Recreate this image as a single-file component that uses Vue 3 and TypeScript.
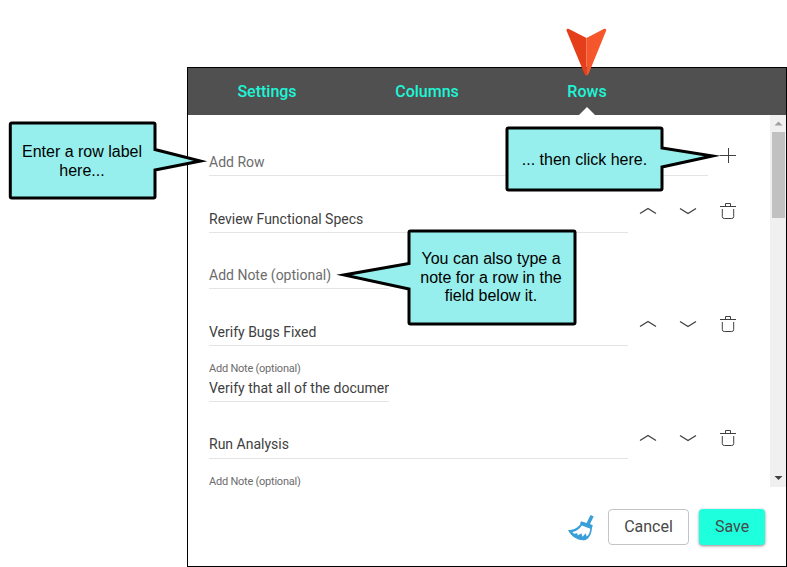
<script setup lang="ts">
import { ref } from 'vue'

interface Row {
  name: string
  note: string
  labelFloats: boolean
}

interface Callout {
  id: string
  path: string
  lines: string[]
}

const tabs = ['Settings', 'Columns', 'Rows']
const activeTab = ref('Rows')

const rows = ref<Row[]>([
  { name: 'Review Functional Specs', note: '', labelFloats: false },
  { name: 'Verify Bugs Fixed', note: 'Verify that all of the documen', labelFloats: true },
  { name: 'Run Analysis', note: '', labelFloats: true },
])

const callouts: Callout[] = [
  {
    id: 'label',
    path: 'M12 123H153.500Q155 123 155 124.500V149.500L200.500 161L155 170V196.500Q155 198 153.500 198H12Q10.300 198 10.300 196.500V124.500Q10.300 123 12 123Z',
    lines: ['Enter a row label', 'here...'],
  },
  {
    id: 'add',
    path: 'M508.500 128H660.500Q662 128 662 129.500V148L712.500 156L662 167V188.500Q662 190 660.500 190H508.500Q507 190 507 188.500V129.500Q507 128 508.500 128Z',
    lines: ['... then click here.'],
  },
  {
    id: 'note',
    path: 'M410.500 231H573.500Q575 231 575 232.500V322.500Q575 324 573.500 324H410.500Q409 324 409 322.500V289L344 275L409 263.500V232.500Q409 231 410.500 231Z',
    lines: ['You can also type a', 'note for a row in the', 'field below it.'],
  },
]
</script>

<template>
  <main class="stage">
    <section class="dialog">
      <nav class="tabs">
        <button
          v-for="tab in tabs"
          :key="tab"
          class="tab"
          :class="{ active: tab === activeTab }"
          @click="activeTab = tab"
        >{{ tab }}</button>
      </nav>

      <div class="body">
        <div class="list">
          <div class="line add-line">
            <div class="field add-field"><span class="hint">Add Row</span></div>
            <svg class="plus" width="16" height="16" viewBox="0 0 16 16"><path d="M0 7.500H16M8.500 0V15" /></svg>
          </div>
          <template v-for="row in rows" :key="row.name">
            <div class="line name-line">
              <div class="field name-field">{{ row.name }}</div>
              <div class="actions">
                <svg class="chevron" width="18" height="18" viewBox="0 0 18 18"><path d="M1 11.500L9 6.500L17 11.500" /></svg>
                <svg class="chevron" width="18" height="18" viewBox="0 0 18 18"><path d="M1 6.500L9 11.500L17 6.500" /></svg>
                <svg width="18" height="18" viewBox="0 0 18 18">
                  <path d="M1 4.500H17M6.500 4.500V1.500H11.500V4.500M3.300 7V14.500Q3.300 16.500 5.300 16.500H12.700Q14.700 16.500 14.700 14.500V7" />
                </svg>
              </div>
            </div>
            <div class="line note-line">
              <div class="field note-field">
                <small v-if="row.labelFloats">Add Note (optional)</small>
                <span v-else class="hint">Add Note (optional)</span>
                <span v-if="row.labelFloats" class="note">{{ row.note }}</span>
              </div>
            </div>
          </template>
        </div>
        <div class="scrollbar">
          <svg width="16" height="17" viewBox="0 0 16 17"><path class="up" d="M4.500 10.500L8.500 6.500L12.500 10.500Z" /></svg>
          <div class="thumb"></div>
          <svg class="end" width="16" height="17" viewBox="0 0 16 17"><path class="down" d="M4.500 6L12.500 6L8.500 10Z" /></svg>
        </div>
      </div>

      <footer class="footer">
        <svg class="broom" width="26" height="26" viewBox="0 0 26 26">
          <path class="blue" d="M22.500 0L25.700 1.500L22 9L24.800 10.300L23.800 13.500L12 9.300L13 6.300L18.600 7.900Z" />
          <path class="blue" d="M13.200 8L24 12.500C23.800 18 21.500 23.500 17.500 25C10.500 26.200 3.500 22 0 15C5.500 15.300 10 13 13.200 8Z" />
          <path class="white" d="M13.800 10.500L22.300 13.700C22 17 20.800 20 18.700 21.600L17.600 18.300L14.700 21.800L13.300 18.300L9.800 20.600L9.300 18.300L6 18.800L4.300 17C8.500 16.300 11.500 14 13.800 10.500Z" />
        </svg>
        <button class="btn cancel">Cancel</button>
        <button class="btn save">Save</button>
      </footer>
    </section>

    <svg class="overlay" width="787" height="567" viewBox="0 0 787 567">
      <path class="dart-left" d="M566.500 30.500Q566 28.200 568.500 28.800L586.500 38V75.500Q585 75.500 584.300 73.500Z" />
      <path class="dart-right" d="M606.200 30.500Q606.600 28.200 604.200 28.800L586.500 38V75.500Q588 75.500 588.700 73.500Z" />
      <path v-for="c in callouts" :key="c.id" class="bubble" :d="c.path" />
    </svg>
    <div v-for="c in callouts" :key="c.id" class="callout" :class="`callout-${c.id}`">
      <div v-for="text in c.lines" :key="text">{{ text }}</div>
    </div>
  </main>
</template>

<style>
body {
  background: #fff;
  overflow: hidden;
}
</style>

<style scoped>
.stage {
  position: relative;
  box-sizing: border-box;
  width: 787px;
  height: 567px;
  padding: 67px 0 0 187px;
  font-family: Roboto, sans-serif;
  color: #404040;
}
.dialog {
  display: flex;
  flex-direction: column;
  box-sizing: border-box;
  width: 600px;
  height: 500px;
  border: 1px solid #000;
  background: #fff;
}
.tabs {
  display: flex;
  height: 47px;
  background: #505050;
}
.tab {
  position: relative;
  width: 160px;
  padding: 0 2px 0 0;
  border: 0;
  background: none;
  color: #1ef5d6;
  font: 500 16px/47px Roboto, sans-serif;
}
.tab.active::after {
  content: '';
  position: absolute;
  left: 71px;
  bottom: 0;
  border: 8px solid transparent;
  border-top: 0;
  border-bottom-color: #fff;
}
.body {
  display: flex;
  height: 372px;
  overflow: hidden;
}
.list {
  flex: 1;
  padding-left: 21px;
  font-size: 14px;
  line-height: 20px;
}
.line {
  display: flex;
}
.field {
  display: flex;
  flex-direction: column;
  justify-content: flex-end;
  box-sizing: border-box;
  padding-bottom: 3px;
  border-bottom: 1px solid #e4e4e4;
  white-space: nowrap;
}
.add-line {
  height: 61px;
}
.add-field {
  width: 499px;
}
.name-line {
  height: 57px;
}
.name-field {
  width: 419px;
}
.name-line:nth-last-child(2) .name-field {
  padding-bottom: 4px;
}
.name-line:nth-last-child(2) .actions {
  margin-top: 27px;
}
.note-line {
  height: 56px;
}
.note-field {
  width: 180px;
}
.note {
  height: 20px;
  overflow: hidden;
}
.hint,
small {
  color: #6c6c6c;
}
small {
  font-size: 11px;
  line-height: 19px;
  letter-spacing: -0.23px;
}
svg {
  display: block;
  fill: none;
  stroke: #404040;
}
.chevron {
  stroke-width: 1.3;
}
.plus {
  margin: 33px 0 0 12px;
}
.actions {
  display: flex;
  gap: 22px;
  margin: 26px 0 0 11px;
}
.scrollbar {
  display: flex;
  flex-direction: column;
  width: 16px;
  background: #f0f0f0;
}
.thumb {
  width: 13px;
  height: 86px;
  margin-left: 2px;
  background: #c1c1c1;
}
.end {
  margin-top: auto;
}
.up {
  fill: #a0a0a0;
  stroke: none;
}
.down {
  fill: #404040;
  stroke: none;
}
.footer {
  display: flex;
  align-items: flex-start;
  justify-content: flex-end;
  padding: 22px 21px 0 0;
}
.broom {
  margin: 6px 14px 0 0;
  stroke: none;
}
.blue {
  fill: #399fd8;
}
.white {
  fill: #fff;
}
.btn {
  box-sizing: border-box;
  height: 36px;
  padding: 0;
  border: 0;
  border-radius: 4px;
  color: #484848;
  font: 16px/34px Roboto, sans-serif;
}
.cancel {
  width: 81px;
  margin-right: 10px;
  border: 1px solid #c4c4c4;
  background: #fff;
}
.save {
  width: 66px;
  background: #1effde;
  box-shadow: 0 1px 3px rgba(0, 0, 0, 0.45);
}
.overlay {
  position: absolute;
  left: 0;
  top: 0;
}
.bubble {
  fill: #96efec;
  stroke: #000;
  stroke-width: 3;
  stroke-miterlimit: 12;
}
.dart-left {
  fill: #e43e1b;
  stroke: none;
}
.dart-right {
  fill: #f6562b;
  stroke: none;
}
.callout {
  position: absolute;
  color: #000;
  font: 16px/18.500px 'Liberation Sans', Arial, sans-serif;
  text-align: center;
  white-space: nowrap;
}
.callout-label {
  left: 9px;
  top: 143px;
  width: 146px;
}
.callout-add {
  left: 506px;
  top: 151px;
  width: 157px;
}
.callout-note {
  left: 408px;
  top: 250px;
  width: 166px;
}
</style>
